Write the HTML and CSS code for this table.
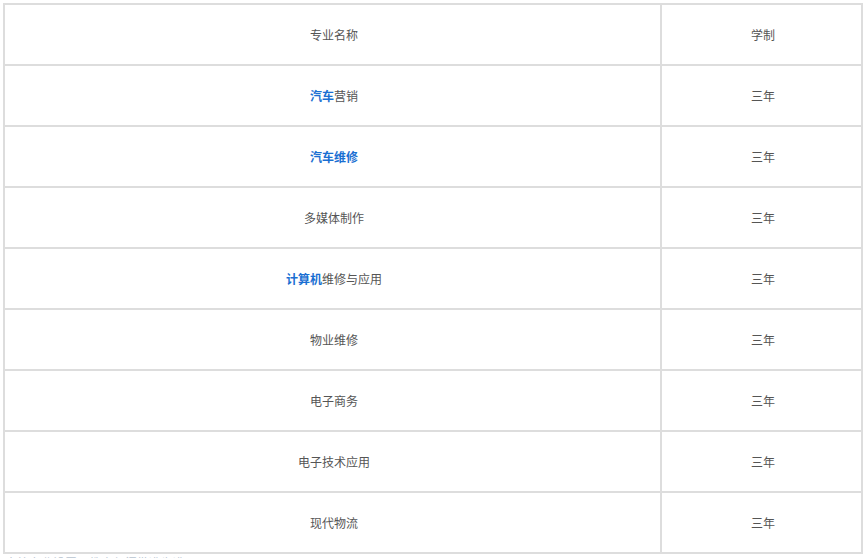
FILE: index.html
```html
<!DOCTYPE html>
<html lang="zh">
<head>
<meta charset="utf-8">
<title>专业设置</title>
<link rel="stylesheet" href="styles.css">
</head>
<body>
<div class="wrap">
  <table class="majors">
    <colgroup><col class="c1"><col class="c2"></colgroup>
    <tbody>
      <tr><td>专业名称</td><td>学制</td></tr>
      <tr><td><a class="kw">汽车</a>营销</td><td>三年</td></tr>
      <tr><td><a class="kw">汽车维修</a></td><td>三年</td></tr>
      <tr><td>多媒体制作</td><td>三年</td></tr>
      <tr><td><a class="kw">计算机</a>维修与应用</td><td>三年</td></tr>
      <tr><td>物业维修</td><td>三年</td></tr>
      <tr><td>电子商务</td><td>三年</td></tr>
      <tr><td>电子技术应用</td><td>三年</td></tr>
      <tr><td>现代物流</td><td>三年</td></tr>
    </tbody>
  </table>
  <p class="note">本校专业设置以教育部门批准为准。</p>
</div>
</body>
</html>
```
FILE: styles.css
```css
html, body {
  margin: 0;
  padding: 0;
  background: #fff;
}
.wrap {
  padding: 3px 0 0 3px;
  font-family: "Noto Sans CJK SC", "Noto Sans", sans-serif;
}
.majors {
  border-collapse: collapse;
  table-layout: fixed;
  width: 858px;
}
.c1 { width: 657px; }
.c2 { width: 201px; }
.majors td {
  border: 2px solid #dddddd;
  height: 59px;
  padding: 0 0 0 3px;
  text-align: center;
  vertical-align: middle;
  font-size: 12px;
  color: #555;
  line-height: 16px;
}
.kw {
  color: #1a6fd2;
  font-weight: bold;
}
.note {
  margin: 1px 0 0 2px;
  font-size: 12px;
  line-height: 16px;
  color: #b8c4d0;
}
```
